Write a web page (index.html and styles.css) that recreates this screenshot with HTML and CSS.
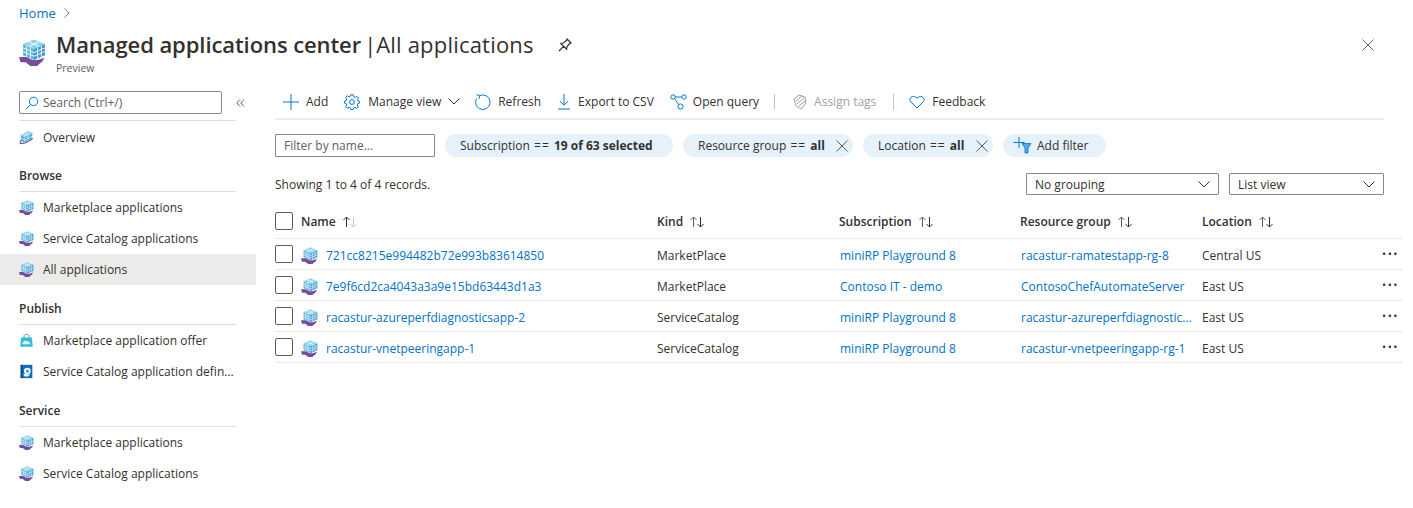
FILE: index.html
```html
<!DOCTYPE html>
<html lang="en">
<head>
    <meta charset="UTF-8">
    <title>Managed applications center | All applications</title>
    <link rel="stylesheet" href="styles.css">
</head>
<body>
    <svg class="icon-defs" width="0" height="0">
        <symbol id="app" viewBox="0 0 18 18">
            <path d="M10 .3 17.300 3.400 10 6.600 2.700 3.400Z" fill="#8fd4ec"/>
            <path d="M2.700 3.400 10 6.600V14L2.700 10.800Z" fill="#59b4d9"/>
            <path d="M17.300 3.400V10.800L10 14V6.600Z" fill="#3c9bd0"/>
            <path d="M6.300 1.800 13.600 5M13.700 1.800 6.400 5M2.700 5.900 10 9.100 17.300 5.900M2.700 8.300 10 11.500 17.300 8.300M5.100 4.500V11.900M7.600 5.500V13M12.400 5.500V13M14.900 4.500V11.900" stroke="#fff" stroke-width=".6" fill="none"/>
            <path d="M0 12H5L9 14H12.500L17 12.500 15.500 15 12 18H7.500L4.500 15.500H1Z" fill="#7a4a9c"/>
        </symbol>
        <symbol id="app-tilt" viewBox="0 0 18 18">
            <path d="M2 6.400 11 1.600 16.400 4 15 11 6 15.400 2 12.600Z" fill="#59b4d9"/>
            <path d="M2 6.400 11 1.600 16.400 4 7 8.800Z" fill="#9bd6ee"/>
            <path d="M7 8.800V15M2 9.600 7 12 15.400 7.600M5 5 10 7M8 3.400 13 5.600M11 7V13" stroke="#fff" stroke-width=".6" fill="none"/>
            <path d="M1 16C5 17.500 12 14 16.600 10M1 16 3 12" stroke="#7a4a9c" stroke-width="1.300" fill="none"/>
        </symbol>
        <symbol id="bag" viewBox="0 0 18 18">
            <path d="M6 6V3.200C6 1.200 12 1.200 12 3.200V6" stroke="#8a8f94" stroke-width="1.200" fill="none"/>
            <path d="M2.500 5.500H15.500L16.500 16.500H1.500Z" fill="#32bedd"/>
            <path d="M5 13.400C3.400 13.200 3.600 11 5.400 11 5.800 9 9 8.600 10 10.400 12 10 13.600 11.200 13 13.400Z" fill="#fff"/>
        </symbol>
        <symbol id="catalog" viewBox="0 0 18 18">
            <path d="M2 1H16V17H2Z" fill="#0f6cbd"/>
            <path d="M2 1H4V17H2Z" fill="#0a4a85"/>
            <circle cx="10" cy="8.500" r="4" fill="#fff"/>
            <path d="M5 12H9L11 13 14 11.600 11 15H7Z" fill="#fff"/>
            <circle cx="10" cy="8.500" r="2" fill="#3c9bd0"/>
        </symbol>
        <symbol id="sort" viewBox="0 0 16 12">
            <path d="M4.500 11V1M1.500 4 4.500 1 7.500 4" stroke="#605e5c" fill="none"/>
            <path d="M11.500 1V11M8.500 8 11.500 11 14.500 8" stroke="#323130" fill="none"/>
        </symbol>
        <symbol id="sort-up" viewBox="0 0 16 12">
            <path d="M4.500 11V1M1.500 4 4.500 1 7.500 4" stroke="#323130" fill="none"/>
            <path d="M11.500 1V11M8.500 8 11.500 11 14.500 8" stroke="#c8c6c4" fill="none"/>
        </symbol>
        <symbol id="close" viewBox="0 0 12 12">
            <path d="M.5.5 11.500 11.500M11.500.5.5 11.500" stroke="#605e5c" fill="none"/>
        </symbol>
        <symbol id="chevron" viewBox="0 0 12 7">
            <path d="M.5.5 6 6 11.500.5" stroke="#323130" fill="none"/>
        </symbol>
    </svg>

    <nav class="breadcrumb">
        <a href="#">Home</a>
        <svg class="crumb-arrow" width="6" height="10" viewBox="0 0 6 10"><path d="M.5.5 5 5 .5 9.500" stroke="#8a8886" fill="none"/></svg>
    </nav>

    <header class="page-header">
        <svg class="header-icon"><use href="#app"/></svg>
        <div class="header-text">
            <h1><span>Managed applications center</span><span class="title-bar">|</span><span class="title-sub">All applications</span></h1>
            <p>Preview</p>
        </div>
        <svg class="pin" width="16" height="16" viewBox="0 0 16 16"><path d="M9.500 1.500 14.500 6.500M10.500 2.500 6.500 6 3.800 6.400 9.600 12.200 10 9.500 13.500 5.500M6.600 9.400 2 14" stroke="#323130" stroke-width="1.200" fill="none"/></svg>
        <svg class="page-close"><use href="#close"/></svg>
    </header>

    <div class="layout">
        <aside class="sidebar">
            <div class="search-row">
                <div class="search-box">
                    <svg width="14" height="14" viewBox="0 0 14 14"><circle cx="8.600" cy="5.400" r="4.200" stroke="#0078d4" fill="none"/><path d="M5.600 8.400 1 13" stroke="#0078d4" fill="none"/></svg>
                    <span>Search (Ctrl+/)</span>
                </div>
                <svg class="collapse" width="9" height="8" viewBox="0 0 9 8"><path d="M4 .5.8 4 4 7.500M8 .5 4.800 4 8 7.500" stroke="#605e5c" fill="none"/></svg>
            </div>

            <a class="side-item first" href="#"><svg><use href="#app-tilt"/></svg>Overview</a>

            <h2 class="side-title">Browse</h2>
            <a class="side-item" href="#"><svg><use href="#app"/></svg>Marketplace applications</a>
            <a class="side-item" href="#"><svg><use href="#app"/></svg>Service Catalog applications</a>
            <a class="side-item active" href="#"><svg><use href="#app"/></svg>All applications</a>

            <h2 class="side-title">Publish</h2>
            <a class="side-item" href="#"><svg><use href="#bag"/></svg>Marketplace application offer</a>
            <a class="side-item" href="#"><svg><use href="#catalog"/></svg>Service Catalog application defin...</a>

            <h2 class="side-title">Service</h2>
            <a class="side-item" href="#"><svg><use href="#app"/></svg>Marketplace applications</a>
            <a class="side-item" href="#"><svg><use href="#app"/></svg>Service Catalog applications</a>
        </aside>

        <main class="content">
            <div class="toolbar">
                <button class="tool tool-add">
                    <svg width="16" height="16" viewBox="0 0 16 16"><path d="M8 0V16M0 8H16" stroke="#0078d4" fill="none"/></svg>Add
                </button>
                <button class="tool tool-manage">
                    <svg width="16" height="16" viewBox="0 0 16 16"><circle cx="8" cy="8" r="2.400" stroke="#0078d4" fill="none"/><path d="M6.800 .8H9.200L9.600 2.800 11.200 3.500 13 2.400 14.600 4 13.500 5.800 14.200 7 15.400 7.200V9.200L13.700 9.800 13.200 11 14.200 12.800 12.700 14.400 11 13.300 9.700 13.900 9.200 15.400H6.800L6.400 13.800 5 13.300 3.200 14.400 1.600 12.800 2.700 11 2.100 9.600.6 9.200V7L2.200 6.400 2.700 5 1.700 3.400 3.300 1.800 5 2.900 6.300 2.400Z" stroke="#0078d4" fill="none"/></svg>Manage view
                    <svg class="tool-chevron"><use href="#chevron"/></svg>
                </button>
                <button class="tool tool-refresh">
                    <svg width="16" height="16" viewBox="0 0 16 16"><path d="M5 1.600A7.200 7.200 0 1 1 1.600 4.600M1.400 .8 4.600 1.600 4 4.800" stroke="#0078d4" fill="none"/></svg>Refresh
                </button>
                <button class="tool tool-export">
                    <svg width="14" height="16" viewBox="0 0 14 16"><path d="M7 0V11M2.800 7 7 11.200 11.200 7M1 15H13" stroke="#0078d4" fill="none"/></svg>Export to CSV
                </button>
                <button class="tool tool-query">
                    <svg width="17" height="16" viewBox="0 0 17 16"><circle cx="3" cy="3" r="2.200" stroke="#0078d4" fill="none"/><circle cx="14" cy="3" r="2.200" stroke="#0078d4" fill="none"/><circle cx="10.500" cy="12.500" r="2.600" stroke="#0078d4" fill="none"/><path d="M5.200 3H11.800M4.600 4.600 8.600 10.400" stroke="#0078d4" fill="none"/></svg>Open query
                </button>
                <span class="tool-sep sep-tags"></span>
                <button class="tool tool-tags disabled">
                    <svg width="14" height="16" viewBox="0 0 14 16"><path d="M1 5 6 1 12 3 13 9 8 15 3 12ZM3 7 9 2M4 10 11 4M6 12 12 7" stroke="#a19f9d" fill="none"/></svg>Assign tags
                </button>
                <span class="tool-sep"></span>
                <button class="tool tool-feedback">
                    <svg width="16" height="14" viewBox="0 0 16 14"><path d="M8 13 1.600 6.600C-1 3.400 3.800-1 8 3.200 12.200-1 17 3.400 14.400 6.600Z" stroke="#0078d4" fill="none"/></svg>Feedback
                </button>
            </div>

            <div class="filters">
                <input class="filter-name" type="text" placeholder="Filter by name...">
                <span class="pill pill-sub"><span>Subscription <i>==</i> <b>19 of 63 selected</b></span></span>
                <span class="pill pill-rg"><span>Resource group <i>==</i> <b>all</b></span><svg class="pill-x"><use href="#close"/></svg></span>
                <span class="pill pill-loc"><span>Location <i>==</i> <b>all</b></span><svg class="pill-x"><use href="#close"/></svg></span>
                <span class="pill pill-add">
                    <svg width="19" height="17" viewBox="0 0 19 17"><path d="M6 0V11M.5 5.500H11.500" stroke="#0078d4" fill="none"/><path d="M9 6.500H18L15 11V16H12V11Z" fill="#59a9e0" stroke="#0078d4" stroke-width=".8"/></svg><span>Add filter</span>
                </span>
            </div>

            <div class="list-bar">
                <span>Showing 1 to 4 of 4 records.</span>
                <div class="select select-group">No grouping<svg><use href="#chevron"/></svg></div>
                <div class="select select-view">List view<svg><use href="#chevron"/></svg></div>
            </div>

            <div class="table">
                <div class="row head">
                    <span class="check"></span>
                    <span>Name<svg class="sort"><use href="#sort-up"/></svg></span>
                    <span>Kind<svg class="sort"><use href="#sort"/></svg></span>
                    <span>Subscription<svg class="sort"><use href="#sort"/></svg></span>
                    <span>Resource group<svg class="sort"><use href="#sort"/></svg></span>
                    <span>Location<svg class="sort"><use href="#sort"/></svg></span>
                    <span></span>
                </div>
                <div class="row item">
                    <span class="check"></span>
                    <span class="name"><svg><use href="#app"/></svg><a href="#">721cc8215e994482b72e993b83614850</a></span>
                    <span>MarketPlace</span>
                    <span><a href="#">miniRP Playground 8</a></span>
                    <span><a href="#">racastur-ramatestapp-rg-8</a></span>
                    <span>Central US</span>
                    <span class="more">&#8226;&#8226;&#8226;</span>
                </div>
                <div class="row item">
                    <span class="check"></span>
                    <span class="name"><svg><use href="#app"/></svg><a href="#">7e9f6cd2ca4043a3a9e15bd63443d1a3</a></span>
                    <span>MarketPlace</span>
                    <span><a href="#">Contoso IT - demo</a></span>
                    <span><a href="#">ContosoChefAutomateServer</a></span>
                    <span>East US</span>
                    <span class="more">&#8226;&#8226;&#8226;</span>
                </div>
                <div class="row item">
                    <span class="check"></span>
                    <span class="name"><svg><use href="#app"/></svg><a href="#">racastur-azureperfdiagnosticsapp-2</a></span>
                    <span>ServiceCatalog</span>
                    <span><a href="#">miniRP Playground 8</a></span>
                    <span class="clip"><a href="#">racastur-azureperfdiagnostic...</a></span>
                    <span>East US</span>
                    <span class="more">&#8226;&#8226;&#8226;</span>
                </div>
                <div class="row item">
                    <span class="check"></span>
                    <span class="name"><svg><use href="#app"/></svg><a href="#">racastur-vnetpeeringapp-1</a></span>
                    <span>ServiceCatalog</span>
                    <span><a href="#">miniRP Playground 8</a></span>
                    <span><a href="#">racastur-vnetpeeringapp-rg-1</a></span>
                    <span>East US</span>
                    <span class="more">&#8226;&#8226;&#8226;</span>
                </div>
            </div>
        </main>
    </div>
</body>
</html>
```

FILE: styles.css
```css
body {
    font-family: "Open Sans", "Noto Sans", Arial, sans-serif;
    font-size: 12px;
    margin: 0;
    height: 508px;
    overflow: hidden;
    background-color: #fff;
    color: #323130;
}
a {
    color: #0072c6;
    text-decoration: none;
}
.icon-defs {
    display: block;
    height: 0;
}

/* breadcrumb + title */
.breadcrumb {
    display: flex;
    align-items: center;
    gap: 8px;
    height: 26px;
    padding-left: 19px;
    font-size: 13px;
}
.page-header {
    display: flex;
    height: 52px;
    padding-left: 19px;
}
.header-icon {
    width: 27px;
    height: 27px;
    margin: 13px 10px 0 0;
}
.header-text h1 {
    display: flex;
    font-size: 22px;
    font-weight: 600;
    line-height: 30px;
    margin: 3px 0 0;
    white-space: nowrap;
    letter-spacing: -0.08px;
}
.title-bar {
    font-weight: 400;
    margin-left: 3px;
}
.title-sub {
    font-weight: 400;
    letter-spacing: 0.2px;
}
.header-text p {
    font-size: 10.5px;
    line-height: 14px;
    margin: 2px 0 0;
    color: #605e5c;
}
.pin {
    margin: 11px 0 0 23px;
}
.page-close {
    width: 12px;
    height: 12px;
    margin: 13px 39px 0 auto;
}

/* sidebar */
.layout {
    display: flex;
}
.sidebar {
    width: 256px;
    flex: none;
    padding-top: 13px;
}
.search-row {
    display: flex;
    align-items: center;
    margin: 0 20px 0 19px;
    padding-bottom: 6px;
    border-bottom: 1px solid #e1dfdd;
}
.search-box {
    display: flex;
    align-items: center;
    gap: 4px;
    flex: none;
    box-sizing: border-box;
    width: 203px;
    height: 23px;
    padding-left: 5px;
    border: 1px solid #8a8886;
    border-radius: 2px;
    color: #605e5c;
}
.collapse {
    flex: none;
    margin-left: 14px;
}
.side-item {
    display: flex;
    align-items: center;
    height: 31px;
    padding-left: 19px;
    color: #323130;
    white-space: nowrap;
}
.side-item svg {
    width: 15px;
    height: 15px;
    margin-right: 9px;
    flex: none;
}
.side-item.first {
    margin: 1px 0 -1px;
}
.side-item.active {
    background-color: #edebe9;
}
.side-title {
    box-sizing: border-box;
    width: 217px;
    font-size: 12px;
    font-weight: 600;
    line-height: 16px;
    margin: 8px 19px 0;
    padding: 8px 0 7px;
    border-bottom: 1px solid #e1dfdd;
}

/* toolbar */
.content {
    flex: 1;
    min-width: 0;
    padding: 0 0 0 19px;
}
.toolbar {
    display: flex;
    align-items: center;
    box-sizing: border-box;
    height: 42px;
    margin-right: 29px;
    padding: 7px 0 0 8px;
    border-bottom: 2px solid #edebe9;
}
.tool {
    display: flex;
    align-items: center;
    gap: 6px;
    padding: 0;
    border: 0;
    background: none;
    font: inherit;
    color: #323130;
    white-space: nowrap;
}
.tool-add { gap: 7px; margin-right: 16px; }
.tool-manage { margin-right: 15px; gap: 8px; }
.tool-refresh { margin-right: 16px; gap: 7px; }
.tool-export { margin-right: 16px; gap: 7px; }
.tool-query { gap: 6px; }
.tool-tags { gap: 7px; }
.tool-feedback { gap: 7px; }
.tool.disabled {
    color: #a19f9d;
}
.tool-chevron {
    width: 12px;
    height: 7px;
    margin-left: -1px;
}
.tool-sep {
    width: 1px;
    height: 16px;
    margin: 0 15px 0 17px;
    background-color: #c8c6c4;
}
.sep-tags {
    margin: 0 18px 0 15px;
}

/* filters */
.filters {
    display: flex;
    align-items: center;
    gap: 10px;
    margin-top: 14px;
    height: 23px;
}
.filter-name {
    box-sizing: border-box;
    width: 160px;
    height: 23px;
    padding: 0 8px;
    border: 1px solid #8a8886;
    border-radius: 1px;
    font: inherit;
}
.filter-name::placeholder {
    color: #605e5c;
    opacity: 1;
}
.pill {
    display: flex;
    align-items: center;
    box-sizing: border-box;
    height: 23px;
    padding: 0 15px;
    border-radius: 12px;
    background-color: #e5f1fb;
    white-space: nowrap;
}
.pill i {
    font-style: normal;
    letter-spacing: 1px;
    margin-left: 1px;
}
.pill b {
    font-weight: 700;
    margin-left: 1px;
}
.pill-sub { width: 228px; }
.pill-rg { width: 170px; }
.pill-loc { width: 130px; }
.pill-add {
    width: 103px;
    padding: 0 0 0 10px;
    gap: 5px;
}
.pill-x {
    width: 12px;
    height: 12px;
    margin-left: auto;
    margin-right: -10px;
}

/* record count + selects */
.list-bar {
    display: flex;
    align-items: center;
    height: 22px;
    margin: 16px 29px 0 0;
}
.list-bar > span {
    margin-right: auto;
}
.select {
    display: flex;
    align-items: center;
    justify-content: space-between;
    box-sizing: border-box;
    height: 22px;
    padding: 0 8px;
    border: 1px solid #8a8886;
    border-radius: 1px;
}
.select svg {
    width: 12px;
    height: 7px;
}
.select-group {
    width: 193px;
    margin-right: 10px;
}
.select-view {
    width: 155px;
}

/* table */
.table {
    margin: 9px 10px 0 0;
}
.row {
    display: grid;
    grid-template-columns: 26px 356px 182px 181px 182px 1fr 40px;
    align-items: center;
    box-sizing: border-box;
    height: 31px;
    border-bottom: 1px solid #edebe9;
}
.row.head {
    height: 35px;
    font-weight: 600;
}
.row.item > span:not(.check) {
    padding-top: 2px;
}
.row span > a {
    margin-left: 1px;
}
.row .name a {
    margin-left: 0;
}
.check {
    box-sizing: border-box;
    width: 18px;
    height: 18px;
    border: 1px solid #605e5c;
    border-radius: 2px;
}
.sort {
    width: 16px;
    height: 12px;
    margin-left: 6px;
    vertical-align: -2px;
}
.name {
    display: flex;
    align-items: center;
}
.name svg {
    width: 17px;
    height: 17px;
    margin-right: 8px;
    flex: none;
}
.clip {
    white-space: nowrap;
}
.row.item > span.more {
    color: #323130;
    font-size: 11px;
    letter-spacing: 1.5px;
    line-height: 12px;
    text-align: right;
    padding: 0 4px 0 0;
}
```
